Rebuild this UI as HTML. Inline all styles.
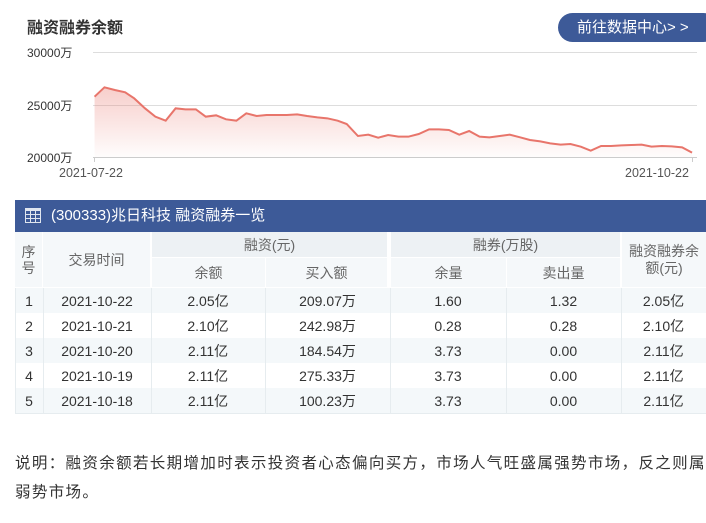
<!DOCTYPE html>
<html><head><meta charset="utf-8"><style>
*{margin:0;padding:0;box-sizing:border-box}
body{width:706px;height:523px;background:#fff;font-family:"Liberation Sans","Noto Sans CJK SC",sans-serif;color:#333;position:relative;overflow:hidden}
.a{position:absolute;white-space:nowrap}
.t{font-size:16px;font-weight:bold;color:#333;left:27px;top:14px}
.btn{left:558px;top:13px;width:160px;height:29px;border-radius:15px;background:#3d5a98;color:#fff;font-size:15px;line-height:29px;padding-left:19px}
.yl{font-size:12px;color:#333;left:27px}
.bar{left:15px;top:200px;width:691px;height:32px;background:#3d5a98;color:#fff;font-size:15px;line-height:32px;padding-left:36px}
.c{position:absolute;text-align:center;font-size:14px;display:flex;align-items:center;justify-content:center}
.h{color:#666;background:#f5f8fa}
.g{background:#edf1f4}
.row{position:absolute;left:15px;width:691px;height:25px}
.note{left:15px;top:449px;font-size:15.5px;line-height:29px;color:#333;letter-spacing:1.35px}
</style></head><body>
<div class="a t">融资融券余额</div>
<div class="a btn">前往数据中心&gt; &gt;</div>
<div class="a yl" style="top:44px">30000万</div>
<div class="a yl" style="top:97px">25000万</div>
<div class="a yl" style="top:149px">20000万</div>
<div class="a" style="left:93px;top:52px;width:604px;height:1px;background:#ddd"></div>
<div class="a" style="left:93px;top:105px;width:604px;height:1px;background:#ddd"></div>
<div class="a" style="left:93px;top:157px;width:604px;height:1px;background:#ccc"></div>
<div class="a" style="left:94px;top:157px;width:1px;height:5px;background:#ccc"></div>
<div class="a" style="left:692px;top:157px;width:1px;height:5px;background:#ccc"></div>
<div class="a" style="left:59px;top:166px;font-size:12.5px;color:#555">2021-07-22</div>
<div class="a" style="left:625px;top:166px;font-size:12.5px;color:#555">2021-10-22</div>
<svg class="a" style="left:0;top:0" width="706" height="190" viewBox="0 0 1568 570" preserveAspectRatio="none">
<defs><linearGradient id="gr" x1="0" y1="0" x2="0" y2="1"><stop offset="0" stop-color="#e8746a" stop-opacity=".35"/><stop offset="1" stop-color="#e8746a" stop-opacity=".02"/></linearGradient></defs>
<path fill="url(#gr)" d="M210,290 L232,262 255,270 278,277 298,295 322,325 345,350 368,362 390,325 412,328 435,328 457,350 480,346 502,358 525,362 547,340 570,348 592,345 615,345 637,345 660,343 682,348 705,352 727,355 750,362 770,372 795,408 818,404 840,413 862,405 885,410 907,410 930,402 953,388 975,388 997,390 1020,404 1042,393 1065,410 1087,412 1110,408 1132,404 1155,412 1177,420 1200,424 1222,430 1245,434 1267,432 1290,440 1312,452 1335,438 1357,438 1380,436 1402,435 1425,434 1447,440 1470,438 1492,439 1515,442 1537,458 L1537,471 L210,471Z"/>
<path fill="none" stroke="#e8756b" stroke-width="2" vector-effect="non-scaling-stroke" d="M210,290 L232,262 255,270 278,277 298,295 322,325 345,350 368,362 390,325 412,328 435,328 457,350 480,346 502,358 525,362 547,340 570,348 592,345 615,345 637,345 660,343 682,348 705,352 727,355 750,362 770,372 795,408 818,404 840,413 862,405 885,410 907,410 930,402 953,388 975,388 997,390 1020,404 1042,393 1065,410 1087,412 1110,408 1132,404 1155,412 1177,420 1200,424 1222,430 1245,434 1267,432 1290,440 1312,452 1335,438 1357,438 1380,436 1402,435 1425,434 1447,440 1470,438 1492,439 1515,442 1537,458"/>
</svg>

<div class="a bar">(300333)兆日科技 融资融券一览</div>
<svg class="a" style="left:25px;top:208px" width="16" height="15" viewBox="0 0 16 15"><rect x="0" y="0" width="16" height="15" fill="#dfe5ef"/><g fill="#3d5a98"><rect x="1" y="3" width="4" height="3"/><rect x="6" y="3" width="4" height="3"/><rect x="11" y="3" width="4" height="3"/><rect x="1" y="7" width="4" height="3"/><rect x="6" y="7" width="4" height="3"/><rect x="11" y="7" width="4" height="3"/><rect x="1" y="11" width="4" height="3"/><rect x="6" y="11" width="4" height="3"/><rect x="11" y="11" width="4" height="3"/></g></svg>

<div class="a" style="left:15px;top:232px;width:691px;height:56px;background:#fff"></div>
<div class="c h" style="left:15px;top:232px;width:27px;height:55px;line-height:16px">序<br>号</div>
<div class="c h" style="left:43px;top:232px;width:107px;height:55px">交易时间</div>
<div class="c h g" style="left:152px;top:232px;width:235px;height:25px">融资(元)</div>
<div class="c h" style="left:152px;top:258px;width:113px;height:29px">余额</div>
<div class="c h" style="left:266px;top:258px;width:121px;height:29px">买入额</div>
<div class="c h g" style="left:391px;top:232px;width:229px;height:25px">融券(万股)</div>
<div class="c h" style="left:391px;top:258px;width:115px;height:29px">余量</div>
<div class="c h" style="left:507px;top:258px;width:113px;height:29px">卖出量</div>
<div class="c h" style="left:622px;top:232px;width:84px;height:55px;line-height:17px">融资融券余<br>额(元)</div>

<div class="row" style="top:288px;background:#f4f8fa"></div>
<div class="row" style="top:313px;background:#fff"></div>
<div class="row" style="top:338px;background:#f4f8fa"></div>
<div class="row" style="top:363px;background:#fff"></div>
<div class="row" style="top:388px;background:#f4f8fa"></div>
<div class="a" style="left:15px;top:413px;width:691px;height:1px;background:#e6ecef"></div>
<div class="a" style="left:15px;top:288px;width:1px;height:125px;background:#e6ecef"></div>
<div class="a" style="left:43px;top:288px;width:1px;height:125px;background:#e6ecef"></div>
<div class="a" style="left:151px;top:288px;width:1px;height:125px;background:#e6ecef"></div>
<div class="a" style="left:265px;top:288px;width:1px;height:125px;background:#e6ecef"></div>
<div class="a" style="left:390px;top:288px;width:1px;height:125px;background:#e6ecef"></div>
<div class="a" style="left:506px;top:288px;width:1px;height:125px;background:#e6ecef"></div>
<div class="a" style="left:621px;top:288px;width:1px;height:125px;background:#e6ecef"></div>

<div style="font-size:14px;color:#333">
<div class="c" style="left:15px;top:288px;width:28px;height:25px">1</div>
<div class="c" style="left:43px;top:288px;width:108px;height:25px">2021-10-22</div>
<div class="c" style="left:151px;top:288px;width:114px;height:25px">2.05亿</div>
<div class="c" style="left:265px;top:288px;width:125px;height:25px">209.07万</div>
<div class="c" style="left:390px;top:288px;width:116px;height:25px">1.60</div>
<div class="c" style="left:506px;top:288px;width:115px;height:25px">1.32</div>
<div class="c" style="left:621px;top:288px;width:85px;height:25px">2.05亿</div>

<div class="c" style="left:15px;top:313px;width:28px;height:25px">2</div>
<div class="c" style="left:43px;top:313px;width:108px;height:25px">2021-10-21</div>
<div class="c" style="left:151px;top:313px;width:114px;height:25px">2.10亿</div>
<div class="c" style="left:265px;top:313px;width:125px;height:25px">242.98万</div>
<div class="c" style="left:390px;top:313px;width:116px;height:25px">0.28</div>
<div class="c" style="left:506px;top:313px;width:115px;height:25px">0.28</div>
<div class="c" style="left:621px;top:313px;width:85px;height:25px">2.10亿</div>

<div class="c" style="left:15px;top:338px;width:28px;height:25px">3</div>
<div class="c" style="left:43px;top:338px;width:108px;height:25px">2021-10-20</div>
<div class="c" style="left:151px;top:338px;width:114px;height:25px">2.11亿</div>
<div class="c" style="left:265px;top:338px;width:125px;height:25px">184.54万</div>
<div class="c" style="left:390px;top:338px;width:116px;height:25px">3.73</div>
<div class="c" style="left:506px;top:338px;width:115px;height:25px">0.00</div>
<div class="c" style="left:621px;top:338px;width:85px;height:25px">2.11亿</div>

<div class="c" style="left:15px;top:363px;width:28px;height:25px">4</div>
<div class="c" style="left:43px;top:363px;width:108px;height:25px">2021-10-19</div>
<div class="c" style="left:151px;top:363px;width:114px;height:25px">2.11亿</div>
<div class="c" style="left:265px;top:363px;width:125px;height:25px">275.33万</div>
<div class="c" style="left:390px;top:363px;width:116px;height:25px">3.73</div>
<div class="c" style="left:506px;top:363px;width:115px;height:25px">0.00</div>
<div class="c" style="left:621px;top:363px;width:85px;height:25px">2.11亿</div>

<div class="c" style="left:15px;top:388px;width:28px;height:25px">5</div>
<div class="c" style="left:43px;top:388px;width:108px;height:25px">2021-10-18</div>
<div class="c" style="left:151px;top:388px;width:114px;height:25px">2.11亿</div>
<div class="c" style="left:265px;top:388px;width:125px;height:25px">100.23万</div>
<div class="c" style="left:390px;top:388px;width:116px;height:25px">3.73</div>
<div class="c" style="left:506px;top:388px;width:115px;height:25px">0.00</div>
<div class="c" style="left:621px;top:388px;width:85px;height:25px">2.11亿</div>
</div>

<div class="a note">说明：融资余额若长期增加时表示投资者心态偏向买方，市场人气旺盛属强势市场，反之则属<br>弱势市场。</div>
</body></html>
